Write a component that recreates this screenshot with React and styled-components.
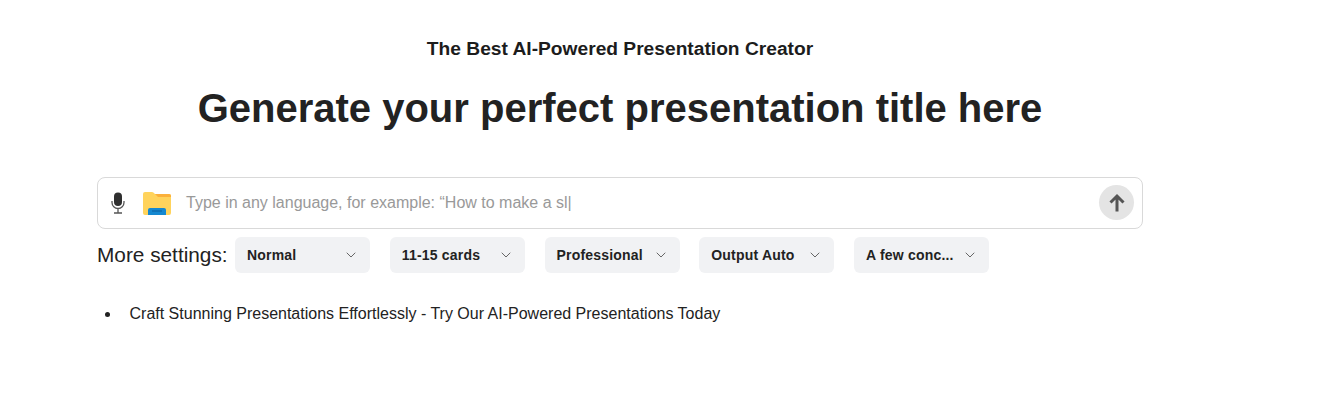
import React from "react";
import styled, { createGlobalStyle } from "styled-components";
import { ChevronDown } from "lucide-react";

const Global = createGlobalStyle`
  html, body { margin: 0; padding: 0; background: #fff; }
  body { font-family: "Liberation Sans", Arial, sans-serif; color: #222; }
`;
const Page = styled.main`
  width: 1046px;
  height: 414px;
  margin-left: 97px;
  display: flex;
  flex-direction: column;
`;
const Tagline = styled.h2`
  margin: 38px 0 0;
  height: 21px;
  font-size: 19.2px;
  line-height: 21px;
  font-weight: 700;
  text-align: center;
  color: #1c1c1c;
`;
const Title = styled.h1`
  margin: 26px 0 0;
  height: 46px;
  font-size: 40px;
  line-height: 46px;
  font-weight: 700;
  text-align: center;
  color: #222;
`;
const InputBar = styled.div`
  margin-top: 46px;
  height: 52px;
  box-sizing: border-box;
  border: 1px solid #d9d9d9;
  border-radius: 8px;
  display: flex;
  align-items: center;
  padding: 0 8px 0 13px;
`;
const Gap = styled.span`
  width: 18px;
`;
const Prompt = styled.div`
  flex: 1;
  margin-left: 15px;
  font-size: 16px;
  color: #999;
`;
const Send = styled.button`
  width: 35px;
  height: 35px;
  border: 0;
  padding: 0;
  margin-bottom: 1px;
  border-radius: 50%;
  background: #e4e4e4;
  display: flex;
  align-items: center;
  justify-content: center;
`;
const Settings = styled.div`
  margin-top: 8px;
  height: 36px;
  display: flex;
  align-items: center;
`;
const Label = styled.span`
  width: 138px;
  font-size: 20.8px;
  color: #222;
`;
const Select = styled.div`
  width: 135px;
  height: 36px;
  box-sizing: border-box;
  margin-right: 19.75px;
  padding: 0 11px 0 12px;
  background: #f1f2f4;
  border-radius: 6px;
  display: flex;
  align-items: center;
  justify-content: space-between;
  font-size: 14px;
  font-weight: 700;
  letter-spacing: 0.2px;
  color: #222;
`;
const List = styled.ul`
  margin: 32px 0 0;
  padding: 0 0 0 8px;
  list-style: none;
  font-size: 16px;
  line-height: 18px;
  color: #222;
`;
const Item = styled.li`
  display: flex;
  align-items: center;
`;
const Bullet = styled.span`
  width: 5px;
  height: 5px;
  margin-right: 19.5px;
  border-radius: 50%;
  background: #222;
`;

const Mic = () => (
  <svg width="14" height="22" viewBox="0 0 14 22" fill="none">
    <rect x="3" y="0.5" width="8" height="13.5" rx="4" fill="#2f2f2f" />
    <path d="M1 9v1.5a6 6 0 0 0 12 0V9M7 16.5V21M3 21h8" stroke="#555" strokeWidth="1.3" />
  </svg>
);
const Folder = () => (
  <svg width="28" height="23" viewBox="0 0 28 23">
    <path d="M0 2a2 2 0 0 1 2-2h7a2 2 0 0 1 1.4.6L12 2h14a2 2 0 0 1 2 2v17a2 2 0 0 1-2 2H2a2 2 0 0 1-2-2z" fill="#ffd35c" />
    <path d="M12 2h14a2 2 0 0 1 2 2v1H15z" fill="#fbb03b" />
    <path d="M5 18a2 2 0 0 1 2-2h14a2 2 0 0 1 2 2v5H5z" fill="#1588d0" />
    <rect x="9" y="18.5" width="10" height="1" fill="#0c5f9e" />
  </svg>
);
const Up = () => (
  <svg width="20" height="20" viewBox="0 0 20 20" fill="none">
    <path d="M10 18.5V3M3.5 9.5L10 3l6.5 6.5" stroke="#555" strokeWidth="3" />
  </svg>
);

export default function App() {
  return (
    <>
      <Global />
      <Page>
        <Tagline>The Best AI-Powered Presentation Creator</Tagline>
        <Title>Generate your perfect presentation title here</Title>
        <InputBar>
          <Mic />
          <Gap />
          <Folder />
          <Prompt>Type in any language, for example: “How to make a sl|</Prompt>
          <Send aria-label="Send"><Up /></Send>
        </InputBar>
        <Settings>
          <Label>More settings:</Label>
          {["Normal", "11-15 cards", "Professional", "Output Auto", "A few conc..."].map((t) => (
            <Select key={t}>{t}<ChevronDown size={16} strokeWidth={1.5} color="#666" /></Select>
          ))}
        </Settings>
        <List><Item><Bullet />Craft Stunning Presentations Effortlessly - Try Our AI-Powered Presentations Today</Item></List>
      </Page>
    </>
  );
}
